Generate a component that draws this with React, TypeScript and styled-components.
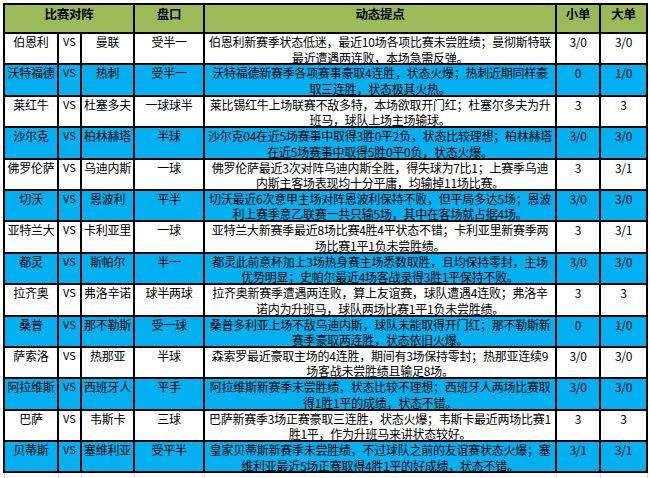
import React from 'react';
import styled, { createGlobalStyle } from 'styled-components';

const GlobalStyle = createGlobalStyle`
  html, body {
    margin: 0;
    padding: 0;
    background: #ffffff;
  }
  body {
    font-family: "Noto Sans CJK SC", "Noto Sans", sans-serif;
    color: #000;
  }
`;

const Sheet = styled.div`
  padding: 3px 0 0 3px;
  width: 650px;
  height: 478px;
  box-sizing: border-box;
  overflow: hidden;
`;

const Grid = styled.table`
  border-collapse: collapse;
  table-layout: fixed;
  width: 645px;
  font-size: 12px;
  line-height: 15.5px;
  letter-spacing: -0.25px;
`;

const HeadCell = styled.th`
  background: #9bbb59;
  border: 2px solid #000;
  height: 26px;
  padding: 1px 0 0;
  vertical-align: top;
  font-weight: bold;
  font-size: 12.5px;
  text-align: center;
`;

const Cell = styled.td<{ $hl?: boolean }>`
  background: ${p => (p.$hl ? '#00b0f0' : '#ffffff')};
  border: 2px solid #000;
  height: 29.4px;
  padding: 0;
  vertical-align: top;
  text-align: center;
  white-space: nowrap;
  overflow: hidden;
`;

const VsCell = styled(Cell)`
  font-size: 11px;
  letter-spacing: 0;
`;

const NoteBox = styled.div`
  height: 28px;
  overflow: visible;
`;

const NoteLine = styled.span`
  display: block;
  white-space: nowrap;
`;

const GhostCell = styled.td`
  border: 1px solid #d9d9d9;
  border-top: none;
  height: 8px;
  padding: 0;
`;

interface Match {
  home: string;
  away: string;
  line: string;
  notes: [string, string];
  small: string;
  big: string;
  hl?: boolean;
}

const matches: Match[] = [
  { home: '伯恩利', away: '曼联', line: '受半一', notes: ['伯恩利新赛季状态低迷，最近10场各项比赛未尝胜绩；曼彻斯特联', '最近遭遇两连败，本场急需反弹。'], small: '3/0', big: '3/0' },
  { home: '沃特福德', away: '热刺', line: '受半一', notes: ['沃特福德新赛季各项赛事豪取4连胜，状态火爆；热刺近期同样豪', '取三连胜，状态极其火热。'], small: '0', big: '1/0', hl: true },
  { home: '莱红牛', away: '杜塞多夫', line: '一球球半', notes: ['莱比锡红牛上场联赛不敌多特，本场欲取开门红；杜塞尔多夫为升', '班马，球队上场主场输球。'], small: '3', big: '3' },
  { home: '沙尔克', away: '柏林赫塔', line: '半球', notes: ['沙尔克04在近5场赛事中取得3胜0平2负，状态比较理想；柏林赫塔', '在近5场赛事中取得5胜0平0负，状态火爆。'], small: '3/0', big: '3/0', hl: true },
  { home: '佛罗伦萨', away: '乌迪内斯', line: '一球', notes: ['佛罗伦萨最近3次对阵乌迪内斯全胜，得失球为7比1；上赛季乌迪', '内斯主客场表现均十分平庸，均输掉11场比赛。'], small: '3', big: '3/1' },
  { home: '切沃', away: '恩波利', line: '平半', notes: ['切沃最近6次意甲主场对阵恩波利保持不败，但平局多达5场；恩波', '利上赛季意乙联赛一共只输5场，其中在客场就占据4场。'], small: '3/0', big: '3/0', hl: true },
  { home: '亚特兰大', away: '卡利亚里', line: '一球', notes: ['亚特兰大新赛季最近8场比赛4胜4平状态不错；卡利亚里新赛季两', '场比赛1平1负未尝胜绩。'], small: '3', big: '3/1' },
  { home: '都灵', away: '斯帕尔', line: '半一', notes: ['都灵此前意杯加上3场热身赛主场悉数取胜，且均保持零封，主场', '优势明显；史帕尔最近4场客战录得3胜1平保持不败。'], small: '3/0', big: '3/0', hl: true },
  { home: '拉齐奥', away: '弗洛辛诺', line: '球半两球', notes: ['拉齐奥新赛季遭遇两连败，算上友谊赛，球队遭遇4连败；弗洛辛', '诺内为升班马，球队两场比赛1平1负未尝胜绩。'], small: '3', big: '3' },
  { home: '桑普', away: '那不勒斯', line: '受一球', notes: ['桑普多利亚上场不敌乌迪内斯，球队未能取得开门红；那不勒斯新', '赛季豪取两连胜，状态依旧火爆。'], small: '0', big: '1/0', hl: true },
  { home: '萨索洛', away: '热那亚', line: '半球', notes: ['森索罗最近豪取主场的4连胜，期间有3场保持零封；热那亚连续9', '场客战未尝胜绩且输足8场。'], small: '3/0', big: '3/0' },
  { home: '阿拉维斯', away: '西班牙人', line: '平手', notes: ['阿拉维斯新赛季未尝胜绩，状态比较不理想；西班牙人两场比赛取', '得1胜1平的成绩，状态不错。'], small: '3/0', big: '3/0', hl: true },
  { home: '巴萨', away: '韦斯卡', line: '三球', notes: ['巴萨新赛季3场正赛豪取三连胜，状态火爆；韦斯卡最近两场比赛1', '胜1平，作为升班马来讲状态较好。'], small: '3', big: '3' },
  { home: '贝蒂斯', away: '塞维利亚', line: '受平半', notes: ['皇家贝蒂斯新赛季未尝胜绩，不过球队之前的友谊赛状态火爆；塞', '维利亚最近5场正赛取得4胜1平的好成绩，状态不错。'], small: '3/1', big: '3/1', hl: true },
];

const widths = [54, 23, 53, 70, 352, 44, 47];

export default function App() {
  return (
    <Sheet>
      <GlobalStyle />
      <Grid>
        <colgroup>
          {widths.map((w, i) => (
            <col key={i} style={{ width: w }} />
          ))}
        </colgroup>
        <thead>
          <tr>
            <HeadCell colSpan={3}>比赛对阵</HeadCell>
            <HeadCell>盘口</HeadCell>
            <HeadCell>动态提点</HeadCell>
            <HeadCell>小单</HeadCell>
            <HeadCell>大单</HeadCell>
          </tr>
        </thead>
        <tbody>
          {matches.map((m, i) => (
            <tr key={i}>
              <Cell $hl={m.hl}>{m.home}</Cell>
              <VsCell $hl={m.hl}>VS</VsCell>
              <Cell $hl={m.hl}>{m.away}</Cell>
              <Cell $hl={m.hl}>{m.line}</Cell>
              <Cell $hl={m.hl}>
                <NoteBox>
                  <NoteLine>{m.notes[0]}</NoteLine>
                  <NoteLine>{m.notes[1]}</NoteLine>
                </NoteBox>
              </Cell>
              <Cell $hl={m.hl}>{m.small}</Cell>
              <Cell $hl={m.hl}>{m.big}</Cell>
            </tr>
          ))}
          <tr>
            {widths.map((_, i) => (
              <GhostCell key={i} />
            ))}
          </tr>
        </tbody>
      </Grid>
    </Sheet>
  );
}
